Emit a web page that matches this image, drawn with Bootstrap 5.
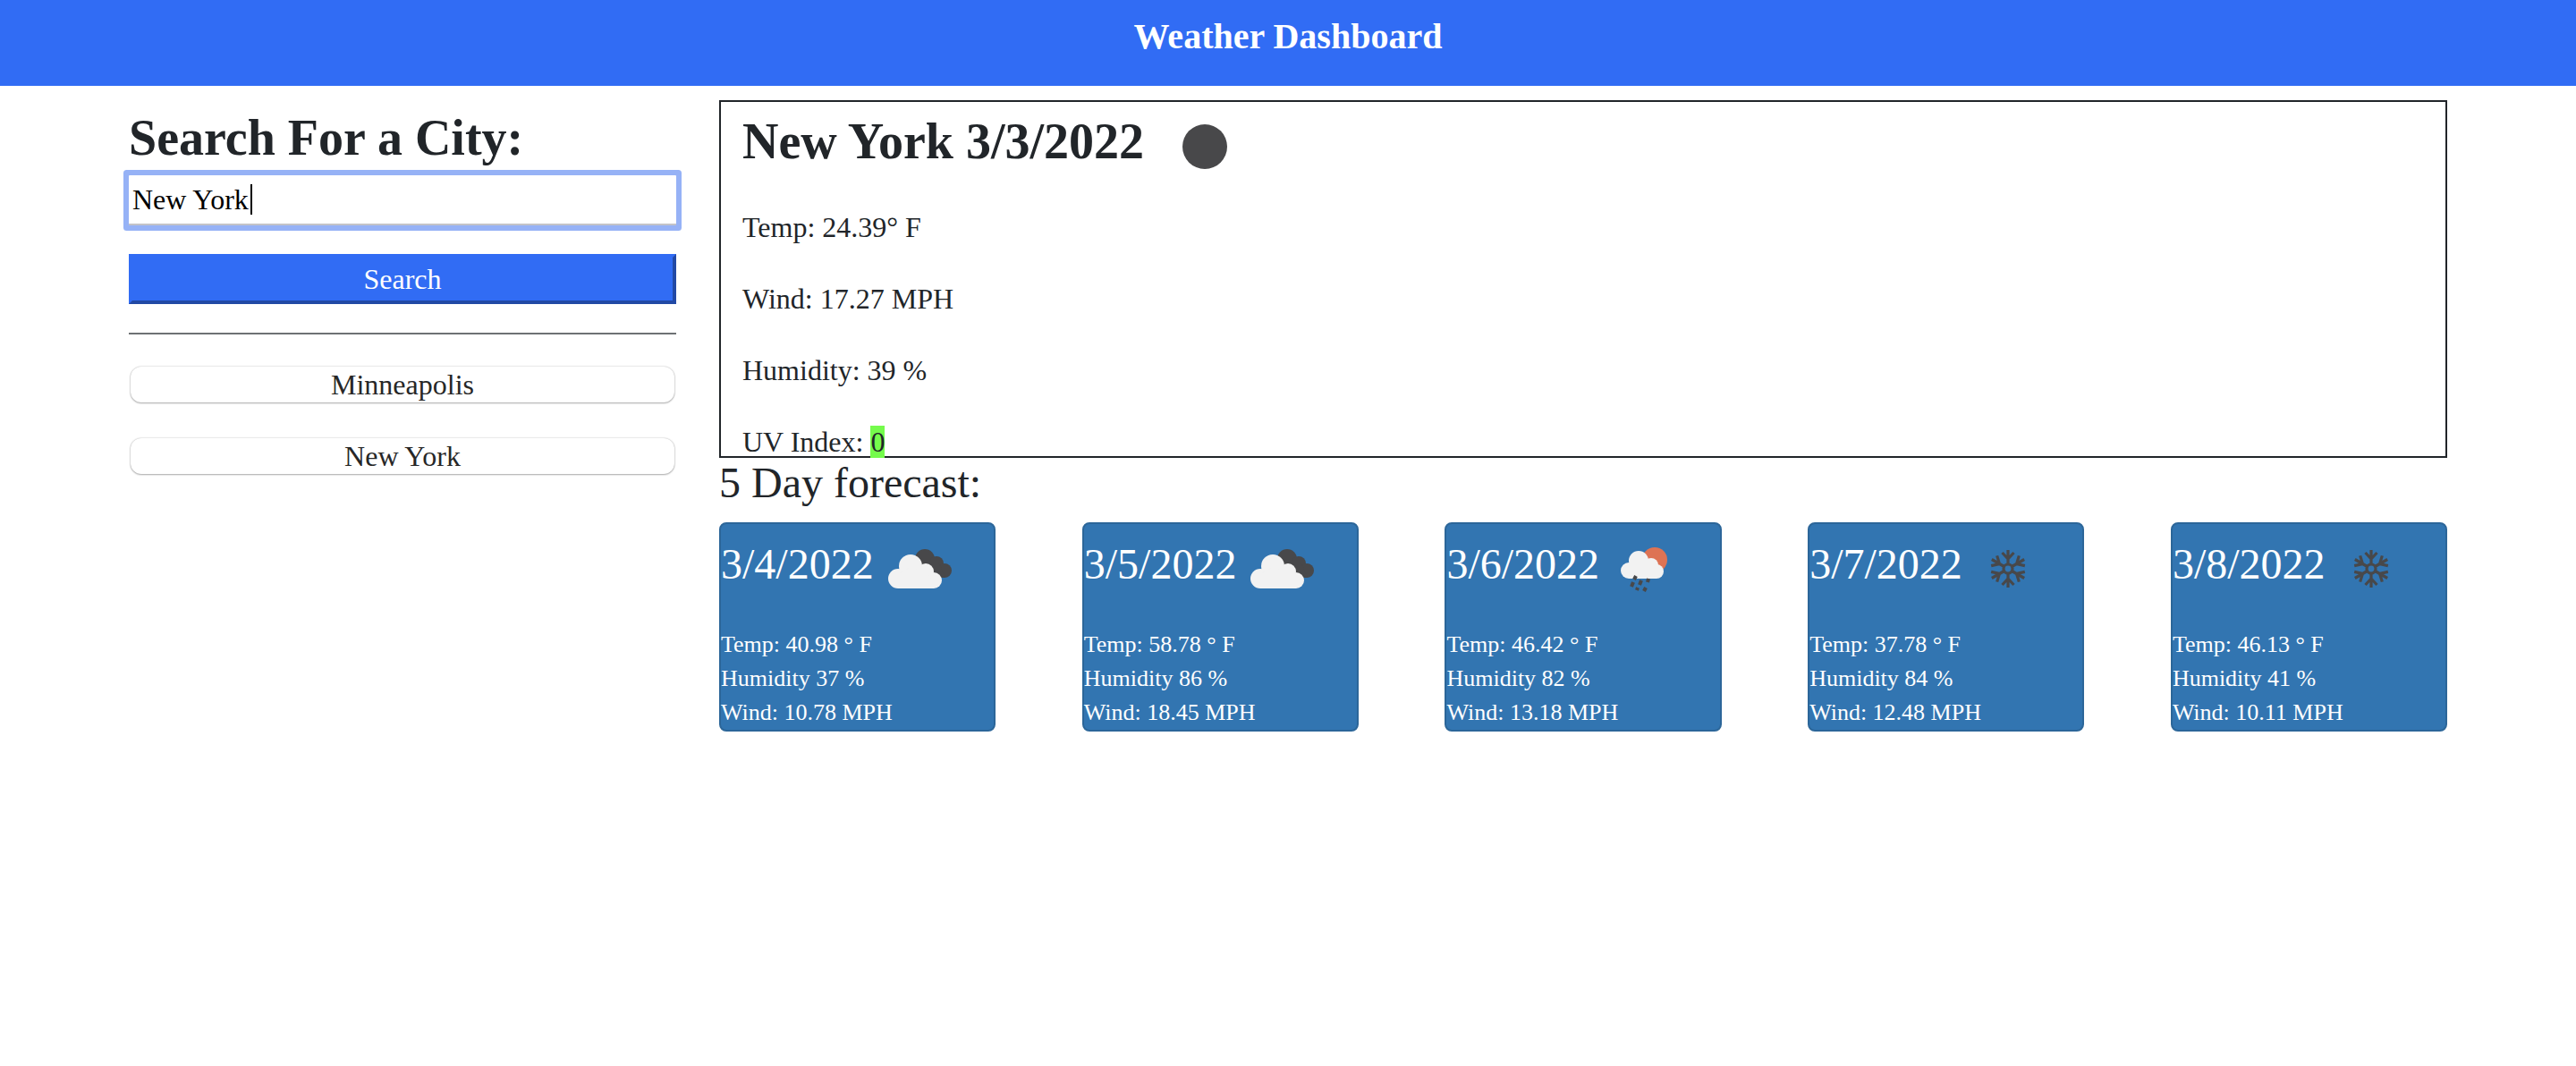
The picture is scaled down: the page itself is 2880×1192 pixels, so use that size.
<!DOCTYPE html>
<html lang="en">
<head>
<meta charset="utf-8">
<meta name="viewport" content="width=device-width, initial-scale=1">
<title>Weather Dashboard</title>
<link rel="stylesheet" href="https://cdn.jsdelivr.net/npm/bootstrap@5.3.0/dist/css/bootstrap.min.css">
<style>
  body { font-family: "Liberation Serif", "Times New Roman", serif; font-size: 32px; line-height: 48px; color: #212529; }
  .top-bar { background: #316cf4; padding: 16px 16px 32px; }
  .top-bar h1 { font-size: 40px; line-height: 50px; margin-bottom: -2px; font-weight: 700; }
  .page-wrap { max-width: 2688px; padding: 16px 48px; }
  .page-row { --bs-gutter-x: 48px; }
  .page-title { font-size: 56px; line-height: 68px; font-weight: 700; }
  .city-input { height: 56px; border: 0; border-bottom: 2px solid #c3c3c8; border-radius: 1px; padding: 0 4px; color: #000; background: #fff; outline: 0; box-shadow: 0 0 0 6px #96b2f6; }
  .caret { position: absolute; left: 136px; top: 10px; width: 2px; height: 34px; background: #000; }
  .search-btn { line-height: 48px; border: 4px solid; border-color: #316cf4 #2249a5 #2249a5 #316cf4; background: #316cf4; color: #fff; padding: 0; margin-top: 32px; }
  .divider { border-top: 2px solid #212529; opacity: .65; margin: 32px 0 36px; }
  .history { gap: 40px; padding: 0 2px; }
  .history-btn { line-height: 40px; border: 0; border-radius: 12px; background: #fff; color: #272727; box-shadow: 0 0 2px rgba(0,0,0,.28), 0 1px 2px rgba(0,0,0,.28); padding: 0; }
  .today { border: 2px solid #212529; padding: 0 24px; height: 400px; }
  .today p { margin-bottom: 32px; }
  .wx { width: 100px; height: 100px; vertical-align: middle; }
  .uv { background: #75fb4c; }
  .sub-title { font-size: 48px; line-height: 56px; }
  .day-card { width: 16%; border: 2px solid #2c6699; border-radius: 8px; background: #3275b1; color: #fff; font-size: 26px; line-height: 38px; }
  .day-title { font-size: 48px; line-height: 58px; }
</style>
</head>
<body>
<svg class="d-none" xmlns="http://www.w3.org/2000/svg">
  <symbol id="clear-night" viewBox="0 0 100 100"><circle cx="50" cy="50" r="25" fill="#48484a"/></symbol>
  <symbol id="clouds" viewBox="0 0 100 100">
    <g fill="#48484a"><circle cx="57" cy="39" r="11"/><circle cx="70" cy="44" r="8"/><circle cx="79" cy="52" r="8"/><path d="M54 42h18l8 18h-10z"/></g>
    <g fill="#f2f2f2"><circle cx="27" cy="61" r="11"/><circle cx="41" cy="47" r="13"/><circle cx="58" cy="53" r="9"/><circle cx="67" cy="63" r="9"/><path d="M27 72V56l14-8 17 6 9 10v8z"/></g>
  </symbol>
  <symbol id="rain" viewBox="0 0 100 100">
    <circle cx="62" cy="40" r="14" fill="#dd7354"/>
    <g fill="#f2f2f2"><circle cx="33" cy="52" r="9"/><circle cx="44" cy="41" r="11"/><circle cx="58" cy="46" r="8"/><circle cx="64" cy="53" r="8"/><path d="M33 61V48l11-6 14 5 6 7v7z"/></g>
    <g stroke="#48484a" stroke-width="4"><path d="M41 58l-2 4M38 65l-2 5M47 63l-2 5M55 61l-1 4M43 71l-1 3M52 71l-2 4"/></g>
  </symbol>
  <symbol id="snow" viewBox="0 0 100 100">
    <g fill="none" stroke="#48484a" stroke-width="3.200">
      <g id="arm"><path d="M51 46V29M44.500 32l6.500 7 6.500-7"/></g>
      <use href="#arm" transform="rotate(60 51 50)"/><use href="#arm" transform="rotate(120 51 50)"/><use href="#arm" transform="rotate(180 51 50)"/><use href="#arm" transform="rotate(240 51 50)"/><use href="#arm" transform="rotate(300 51 50)"/>
      <circle cx="51" cy="50" r="5"/>
    </g>
  </symbol>
</svg>

<header class="top-bar text-center text-white"><h1 class="mt-0">Weather Dashboard</h1></header>

<main class="container-fluid page-wrap">
  <div class="row page-row">
    <aside class="col-3">
      <form class="d-flex flex-column" onsubmit="return false">
        <label class="page-title mt-2" for="city">Search For a City:</label>
        <div class="position-relative d-flex mt-2">
          <input class="city-input w-100" id="city" type="text" value="New York" autocomplete="off">
          <span class="caret"></span>
        </div>
        <button class="search-btn w-100" type="submit">Search</button>
      </form>
      <hr class="divider">
      <div class="d-flex flex-column history">
        <button class="history-btn" type="button">Minneapolis</button>
        <button class="history-btn" type="button">New York</button>
      </div>
    </aside>
    <div class="col-9">
      <section class="today">
        <h2 class="page-title mb-3">New York 3/3/2022 <svg class="wx ms-1" role="img" aria-label="Clear night"><use href="#clear-night"/></svg></h2>
        <p>Temp: 24.39° F</p>
        <p>Wind: 17.27 MPH</p>
        <p>Humidity: 39 %</p>
        <p class="mb-0">UV Index: <span class="uv">0</span></p>
      </section>
      <h3 class="sub-title mb-3">5 Day forecast:</h3>
      <section class="d-flex justify-content-between">
        <article class="day-card">
          <h4 class="day-title mb-3">3/4/2022<svg class="wx" role="img" aria-label="Cloudy"><use href="#clouds"/></svg></h4>
          <div>Temp: 40.98 ° F</div>
          <div>Humidity 37 %</div>
          <div>Wind: 10.78 MPH</div>
        </article>
        <article class="day-card">
          <h4 class="day-title mb-3">3/5/2022<svg class="wx" role="img" aria-label="Cloudy"><use href="#clouds"/></svg></h4>
          <div>Temp: 58.78 ° F</div>
          <div>Humidity 86 %</div>
          <div>Wind: 18.45 MPH</div>
        </article>
        <article class="day-card">
          <h4 class="day-title mb-3">3/6/2022<svg class="wx" role="img" aria-label="Rain"><use href="#rain"/></svg></h4>
          <div>Temp: 46.42 ° F</div>
          <div>Humidity 82 %</div>
          <div>Wind: 13.18 MPH</div>
        </article>
        <article class="day-card">
          <h4 class="day-title mb-3">3/7/2022<svg class="wx" role="img" aria-label="Snow"><use href="#snow"/></svg></h4>
          <div>Temp: 37.78 ° F</div>
          <div>Humidity 84 %</div>
          <div>Wind: 12.48 MPH</div>
        </article>
        <article class="day-card">
          <h4 class="day-title mb-3">3/8/2022<svg class="wx" role="img" aria-label="Snow"><use href="#snow"/></svg></h4>
          <div>Temp: 46.13 ° F</div>
          <div>Humidity 41 %</div>
          <div>Wind: 10.11 MPH</div>
        </article>
      </section>
    </div>
  </div>
</main>
<script src="https://cdn.jsdelivr.net/npm/bootstrap@5.3.0/dist/js/bootstrap.bundle.min.js"></script>
</body>
</html>
